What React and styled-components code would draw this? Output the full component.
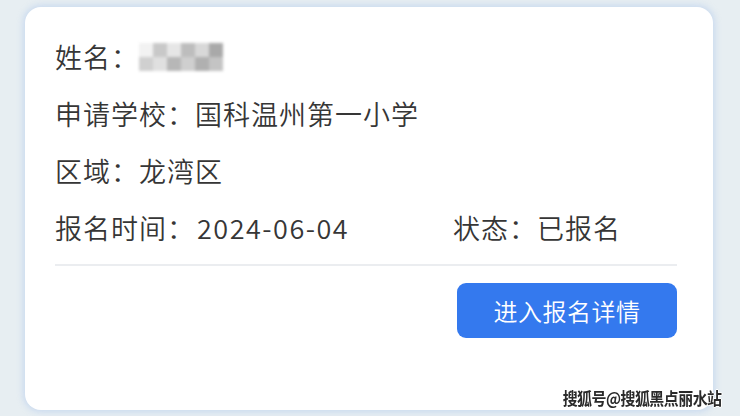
import styled, { createGlobalStyle } from 'styled-components'

const Global = createGlobalStyle`
html, body {
    margin: 0;
    padding: 0;
    background: #e7eef2;
}
body {
    font-family: "Noto Sans CJK SC", "Noto Sans", sans-serif;
    width: 740px;
    height: 416px;
    overflow: hidden;
}
`

const Page = styled.div`
position: relative;
width: 740px;
height: 416px;
padding: 7px 27px 6px 25px;
box-sizing: border-box;
`

const Card = styled.div`
height: 100%;
box-sizing: border-box;
background: #fff;
border-radius: 16px;
box-shadow: 0 0 6px 2px rgba(190, 210, 238, 0.7);
padding: 21px 36px 0 30px;
display: flex;
flex-direction: column;
`

const Row = styled.div`
display: flex;
align-items: center;
height: 57px;
font-size: 27px;
font-weight: 350;
color: #363636;
letter-spacing: 1px;
`

const Field = styled.div`
display: flex;
align-items: center;
width: ${p => p.width || 'auto'};
`

const Value = styled.span`
letter-spacing: 1.5px;
margin-left: 2px;
`

const Blur = styled.div`
display: grid;
grid-template-columns: repeat(6, 14px);
grid-template-rows: repeat(2, 14px);
filter: blur(1.6px);
`

const Cell = styled.span`
background: ${p => p.c};
`

const Divider = styled.div`
height: 2px;
background: #ebedf0;
margin-top: 8px;
`

const Actions = styled.div`
display: flex;
justify-content: flex-end;
margin-top: 17px;
`

const Button = styled.button`
width: 220px;
height: 55px;
border: none;
border-radius: 9px;
background: #3479ee;
color: #fff;
font-family: inherit;
font-size: 24px;
font-weight: 350;
letter-spacing: 0.5px;
`

const Watermark = styled.div`
position: absolute;
right: 18px;
bottom: 6px;
font-size: 17px;
font-weight: 700;
color: #2a2a2a;
letter-spacing: -0.6px;
transform: scaleX(0.88);
transform-origin: right center;
text-shadow: 1px 0 0 #fff, -1px 0 0 #fff, 0 1px 0 #fff, 0 -1px 0 #fff;
`

const shades = [
    '#f2f2f2', '#c8c8c8', '#e6e6e6', '#bdbdbd', '#d8d8d8', '#a9a9a9',
    '#d0d0d0', '#e0e0e0', '#b7b7b7', '#cfcfcf', '#b0b0b0', '#c4c4c4',
]

const App = () => {
    return (
        <Page>
            <Global />
            <Card>
                <Row>
                    姓名：
                    <Blur>
                        {shades.map((c, i) => <Cell key={i} c={c} />)}
                    </Blur>
                </Row>
                <Row>申请学校：国科温州第一小学</Row>
                <Row>区域：龙湾区</Row>
                <Row>
                    <Field width="398px">
                        报名时间：<Value>2024-06-04</Value>
                    </Field>
                    <Field>状态：已报名</Field>
                </Row>
                <Divider />
                <Actions>
                    <Button>进入报名详情</Button>
                </Actions>
            </Card>
            <Watermark>搜狐号@搜狐黑点丽水站</Watermark>
        </Page>
    )
}

export default App
